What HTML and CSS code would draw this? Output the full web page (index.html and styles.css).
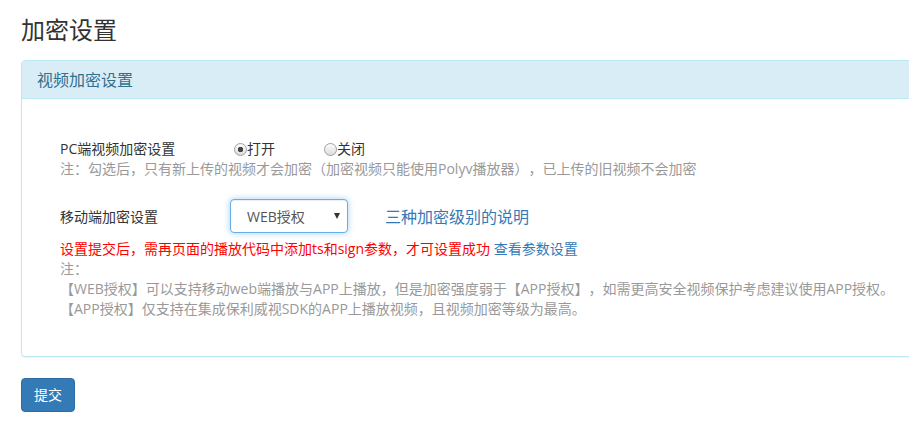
FILE: index.html
```html
<!DOCTYPE html>
<html lang="zh-CN">
<head>
<meta charset="utf-8">
<title>加密设置</title>
<link rel="stylesheet" href="styles.css">
</head>
<body>
<div class="page">
  <h3 class="page-title">加密设置</h3>
  <div class="panel">
    <div class="panel-heading"><h3 class="panel-title">视频加密设置</h3></div>
    <div class="panel-body">
      <div class="form">
        <div class="row row-pc">
          <span class="label">PC端视频加密设置</span>
          <label class="radio"><input type="radio" name="pc" checked>打开</label>
          <label class="radio radio-off"><input type="radio" name="pc">关闭</label>
        </div>
        <p class="note">注：勾选后，只有新上传的视频才会加密（加密视频只能使用Polyv播放器），已上传的旧视频不会加密</p>
        <div class="row row-mobile">
          <span class="label">移动端加密设置</span>
          <div class="select-wrap">
            <select class="select"><option>WEB授权</option><option>APP授权</option></select>
            <span class="caret"></span>
          </div>
          <a class="help-link" href="#">三种加密级别的说明</a>
        </div>
        <p class="warn">设置提交后，需再页面的播放代码中添加ts和sign参数，才可设置成功 <a class="link" href="#">查看参数设置</a></p>
        <div class="notes">
          <p class="note">注：</p>
          <p class="note">【WEB授权】可以支持移动web端播放与APP上播放，但是加密强度弱于【APP授权】，如需更高安全视频保护考虑建议使用APP授权。</p>
          <p class="note">【APP授权】仅支持在集成保利威视SDK的APP上播放视频，且视频加密等级为最高。</p>
        </div>
      </div>
    </div>
  </div>
  <button class="btn" type="button">提交</button>
</div>
</body>
</html>
```

FILE: styles.css
```css
html {
  overflow: hidden;
}
body {
  margin: 0;
  font-family: "Open Sans", "Noto Sans CJK SC", sans-serif;
  font-size: 14px;
  color: #333;
  background: #fff;
  text-spacing-trim: space-all;
}
.page {
  width: 1000px;
  padding: 0 21px;
}
.page-title {
  margin: 16px 0 17px;
  font-size: 24px;
  line-height: 27px;
  font-weight: 400;
  color: #333;
}
.panel {
  border: 1px solid #bce8f1;
  border-radius: 4px;
  box-shadow: 0 1px 1px rgba(0, 0, 0, 0.05);
  margin-bottom: 21px;
  background: #fff;
}
.panel-heading {
  background: #d9edf7;
  border-bottom: 1px solid #bce8f1;
  border-radius: 3px 3px 0 0;
  padding: 11px 15px 9px;
}
.panel-title {
  margin: 0;
  font-size: 16px;
  line-height: 17px;
  font-weight: 400;
  color: #31708f;
}
.panel-body {
  padding: 15px;
}
.form {
  padding: 25px 0 22px 23px;
}
.row {
  display: flex;
  align-items: center;
}
.row-pc {
  line-height: 20px;
}
.label {
  width: 170px;
  flex: none;
  color: #333;
}
.radio {
  display: flex;
  align-items: center;
  color: #333;
}
.radio input {
  appearance: none;
  -webkit-appearance: none;
  width: 13px;
  height: 13px;
  margin: 0 0 0 4px;
  border: 1px solid #a0a0a0;
  border-radius: 50%;
  background: linear-gradient(#fdfdfd, #dcdcdc);
  box-sizing: border-box;
}
.radio input:checked {
  background: radial-gradient(circle, #444 0, #444 2.5px, transparent 3px), linear-gradient(#fdfdfd, #dcdcdc);
}
.radio-off {
  margin-left: 45px;
}
.note {
  margin: 0;
  line-height: 20px;
  color: #999;
}
.row-mobile {
  margin-top: 20px;
  height: 34px;
}
.select-wrap {
  position: relative;
  width: 118px;
  height: 34px;
}
.select {
  appearance: none;
  -webkit-appearance: none;
  width: 118px;
  height: 34px;
  margin: 0;
  padding: 0 20px 0 16px;
  border: 1px solid #66afe9;
  border-radius: 4px;
  background: #fff;
  box-shadow: inset 0 1px 1px rgba(0, 0, 0, 0.075), 0 0 6px rgba(102, 175, 233, 0.6);
  font: inherit;
  font-size: 14px;
  color: #555;
  outline: none;
}
.caret {
  position: absolute;
  right: 8px;
  top: 14px;
  width: 0;
  height: 0;
  border-left: 3.5px solid transparent;
  border-right: 3.5px solid transparent;
  border-top: 6px solid #333;
  pointer-events: none;
}
.help-link {
  margin-left: 37px;
  font-size: 16px;
  color: #337ab7;
  text-decoration: none;
}
.warn {
  margin: 6px 0 0;
  line-height: 20px;
  color: #f00;
}
.link {
  color: #337ab7;
  text-decoration: none;
}
.btn {
  display: block;
  padding: 6px 12px;
  font: inherit;
  font-size: 14px;
  line-height: 20px;
  color: #fff;
  background: #337ab7;
  border: 1px solid #2e6da4;
  border-radius: 4px;
}
```
